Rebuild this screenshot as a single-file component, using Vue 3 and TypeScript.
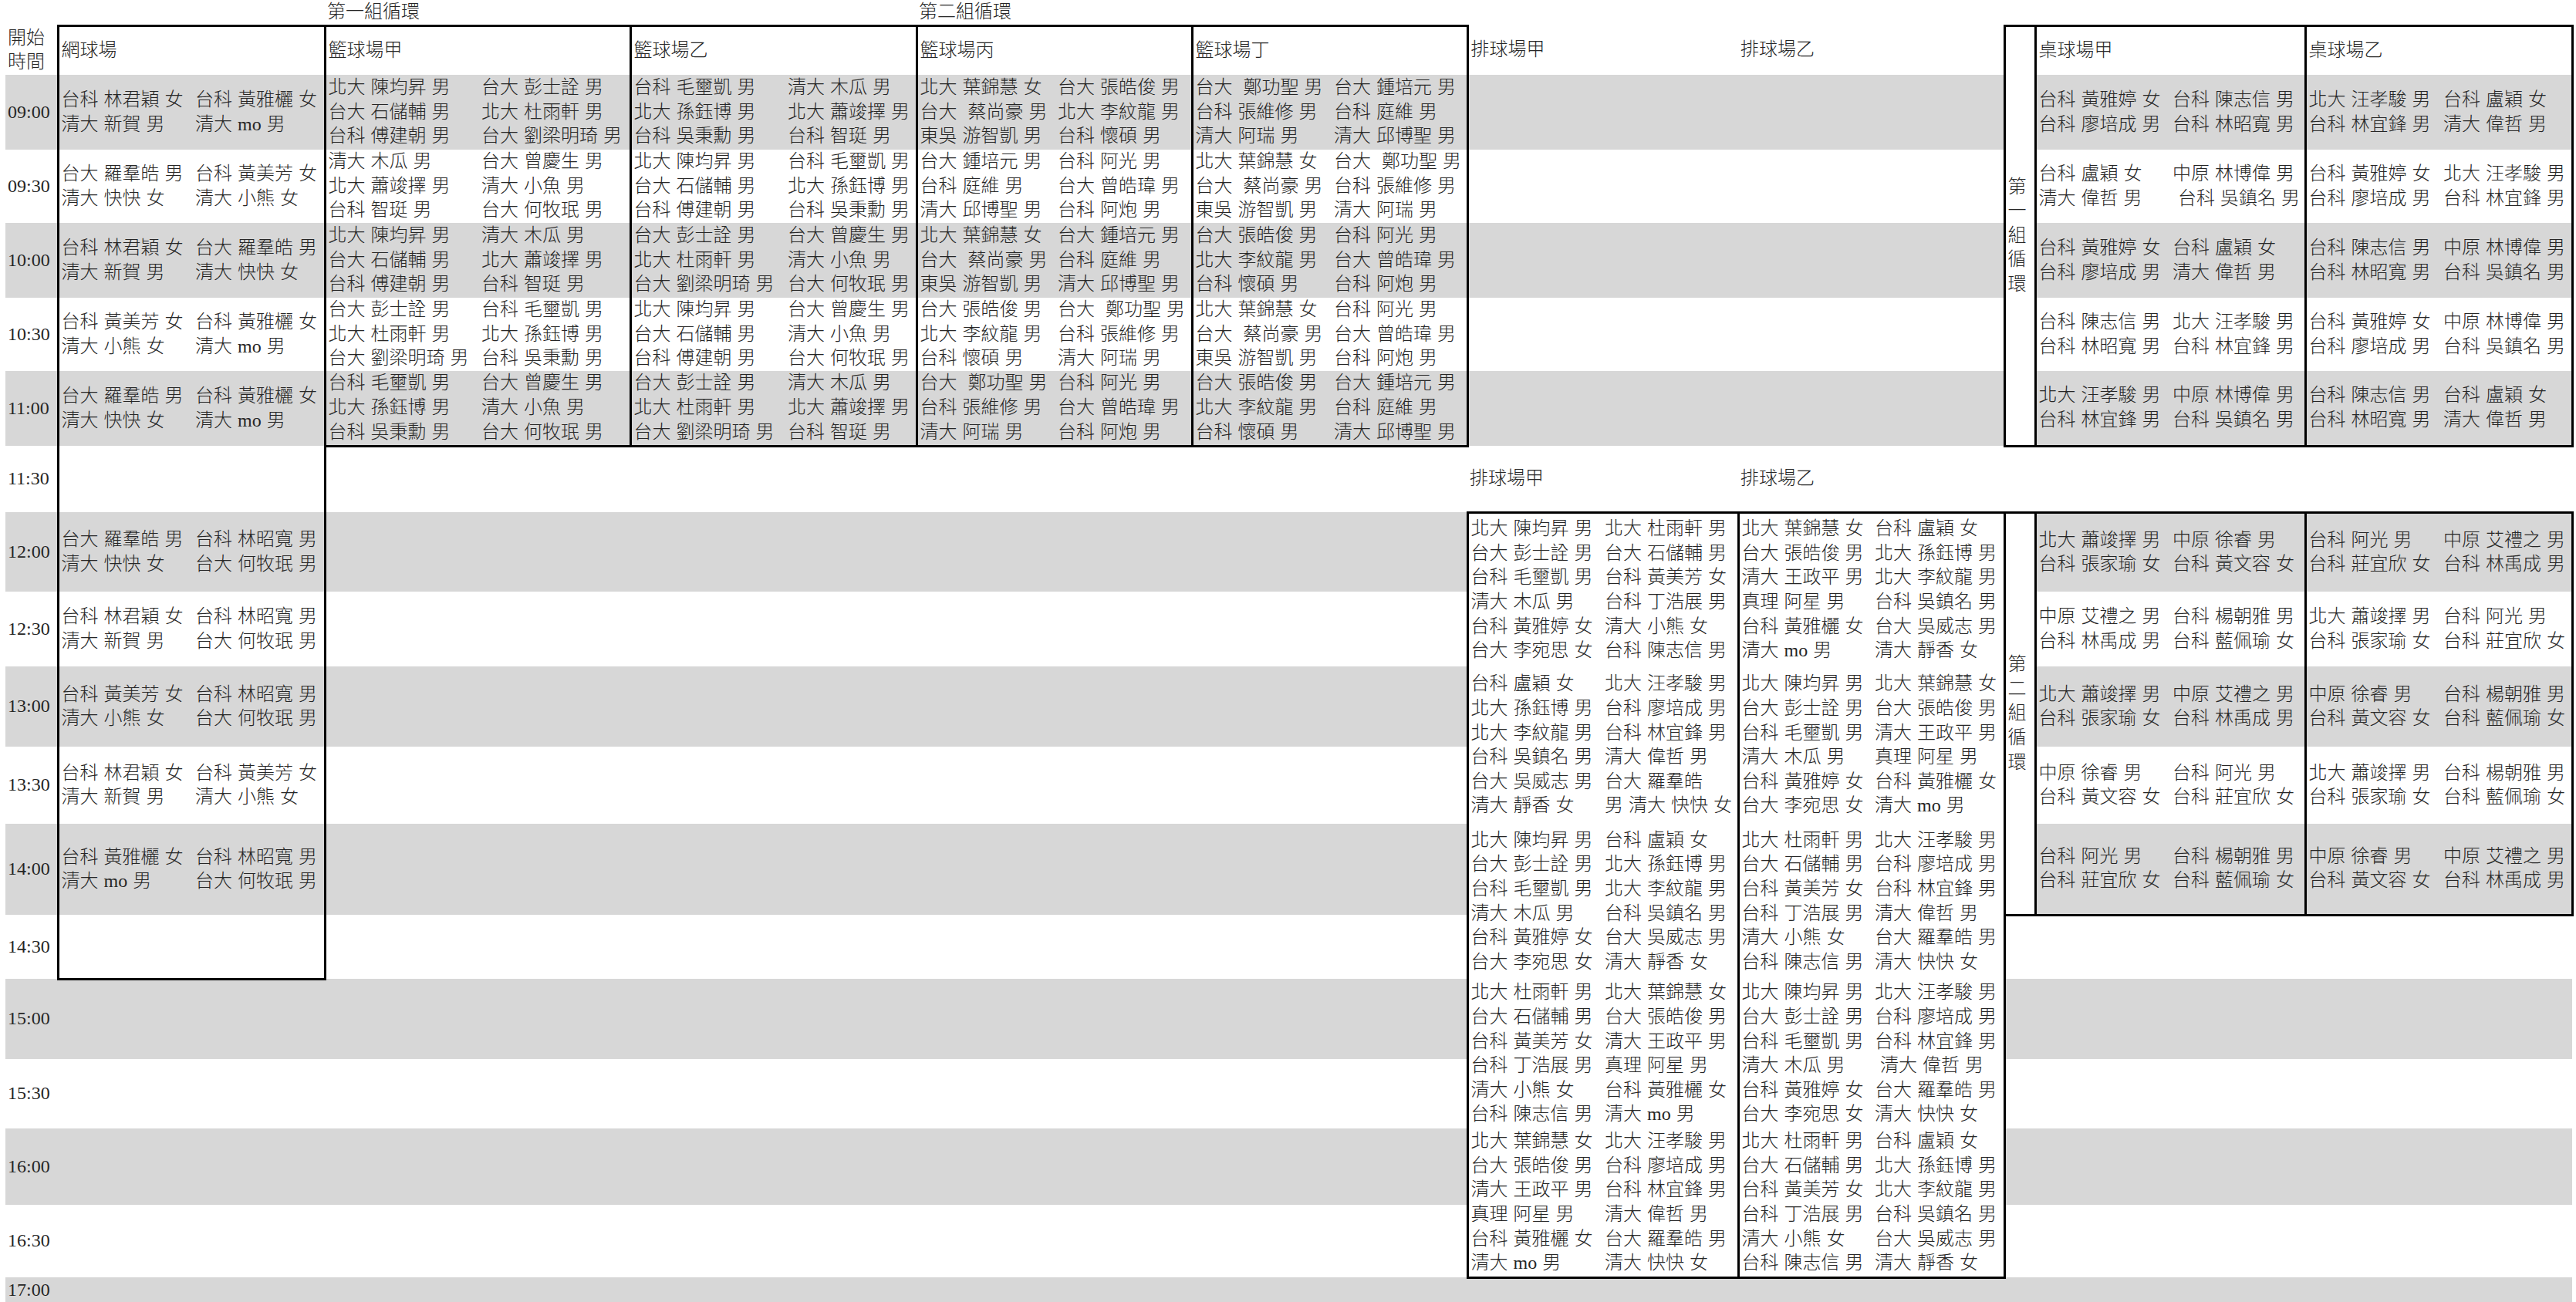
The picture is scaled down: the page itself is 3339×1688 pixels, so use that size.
<script setup lang="ts">
interface Cell {
  lines?: string[]
  span?: number
  rows?: number
  cls?: string
}
interface Row {
  height: number
  grey: boolean
  cells: Cell[]
}

const colWidths = [68, 175, 171, 200, 196, 201, 170, 180, 177, 181, 176, 175, 176, 174, 171, 40, 175, 175, 176, 170]

const ten = {
  a: '台科 林君穎 女|清大 新賀 男',
  b: '台科 黃雅欐 女|清大 mo 男',
  c: '台大 羅羣皓 男|清大 快快 女',
  d: '台科 黃美芳 女|清大 小熊 女',
  e: '台科 林昭寬 男|台大 何牧珉 男',
}
const bk = {
  a: '北大 陳均昇 男|台大 石儲輔 男|台科 傅建朝 男',
  b: '台大 彭士詮 男|北大 杜雨軒 男|台大 劉梁明琦 男',
  c: '清大 木瓜 男|北大 蕭竣擇 男|台科 智珽 男',
  d: '台大 曾慶生 男|清大 小魚 男|台大 何牧珉 男',
  e: '台科 毛壐凱 男|北大 孫鈺博 男|台科 吳秉勳 男',
  f: '北大 葉錦慧 女|台大  蔡尚豪 男|東吳 游智凱 男',
  g: '台大 張皓俊 男|北大 李紋龍 男|台科 懷碩 男',
  h: '台大 鍾培元 男|台科 庭維 男|清大 邱博聖 男',
  i: '台科 阿光 男|台大 曾皓瑋 男|台科 阿炮 男',
  j: '台大  鄭功聖 男|台科 張維修 男|清大 阿瑞 男',
}
const vb = {
  a: '北大 陳均昇 男|台大 彭士詮 男|台科 毛壐凱 男|清大 木瓜 男|台科 黃雅婷 女|台大 李宛思 女',
  b: '北大 杜雨軒 男|台大 石儲輔 男|台科 黃美芳 女|台科 丁浩展 男|清大 小熊 女|台科 陳志信 男',
  c: '台科 盧穎 女|北大 孫鈺博 男|北大 李紋龍 男|台科 吳鎮名 男|台大 吳威志 男|清大 靜香 女',
  d: '北大 汪孝駿 男|台科 廖培成 男|台科 林宜鋒 男|清大 偉哲 男|台大 羅羣皓 男|清大 快快 女',
  dw: '北大 汪孝駿 男|台科 廖培成 男|台科 林宜鋒 男|清大 偉哲 男|台大 羅羣皓|男 清大 快快 女',
  ds: '北大 汪孝駿 男|台科 廖培成 男|台科 林宜鋒 男| 清大 偉哲 男|台大 羅羣皓 男|清大 快快 女',
  e: '北大 葉錦慧 女|台大 張皓俊 男|清大 王政平 男|真理 阿星 男|台科 黃雅欐 女|清大 mo 男',
}
const tt = {
  a: '台科 黃雅婷 女|台科 廖培成 男',
  b: '台科 陳志信 男|台科 林昭寬 男',
  c: '台科 盧穎 女|清大 偉哲 男',
  d: '中原 林博偉 男|台科 吳鎮名 男',
  ds: '中原 林博偉 男| 台科 吳鎮名 男',
  e: '北大 汪孝駿 男|台科 林宜鋒 男',
  f: '北大 蕭竣擇 男|台科 張家瑜 女',
  g: '中原 徐睿 男|台科 黃文容 女',
  h: '中原 艾禮之 男|台科 林禹成 男',
  i: '台科 楊朝雅 男|台科 藍佩瑜 女',
  j: '台科 阿光 男|台科 莊宜欣 女',
}

function court(first?: string, second?: string, extra = '', rows?: number): Cell[] {
  return [
    { lines: first?.split('|'), cls: `l ${extra}`, rows },
    { lines: second?.split('|'), cls: `r ${extra}`, rows },
  ]
}
const time = (t: string): Cell => ({ lines: [t] })
const blank = (span: number): Cell => ({ span })
const label = (t: string, cls = ''): Cell => ({ lines: [t], span: 2, cls })

const rows: Row[] = [
  {
    height: 32,
    grey: false,
    cells: [
      blank(3),
      { lines: ['第一組循環'], span: 4 },
      { lines: ['第二組循環'], span: 4 },
      blank(9),
    ],
  },
  {
    height: 64,
    grey: false,
    cells: [
      { lines: ['開始', '時間'] },
      label('網球場', 'l r t'),
      label('籃球場甲', 'l r t'),
      label('籃球場乙', 'l r t'),
      label('籃球場丙', 'l r t'),
      label('籃球場丁', 'l r t'),
      label('排球場甲'),
      label('排球場乙'),
      { lines: ['第', '一', '組', '循', '環'], rows: 6, cls: 'l r t b w' },
      label('桌球場甲', 'l r t'),
      label('桌球場乙', 'l r t'),
    ],
  },
  {
    height: 97,
    grey: true,
    cells: [
      time('09:00'),
      ...court(ten.a, ten.b),
      ...court(bk.a, bk.b),
      ...court(bk.e, bk.c),
      ...court(bk.f, bk.g),
      ...court(bk.j, bk.h),
      blank(4),
      ...court(tt.a, tt.b),
      ...court(tt.e, tt.c),
    ],
  },
  {
    height: 95,
    grey: false,
    cells: [
      time('09:30'),
      ...court(ten.c, ten.d),
      ...court(bk.c, bk.d),
      ...court(bk.a, bk.e),
      ...court(bk.h, bk.i),
      ...court(bk.f, bk.j),
      blank(4),
      ...court(tt.c, tt.ds),
      ...court(tt.a, tt.e),
    ],
  },
  {
    height: 97,
    grey: true,
    cells: [
      time('10:00'),
      ...court(ten.a, ten.c),
      ...court(bk.a, bk.c),
      ...court(bk.b, bk.d),
      ...court(bk.f, bk.h),
      ...court(bk.g, bk.i),
      blank(4),
      ...court(tt.a, tt.c),
      ...court(tt.b, tt.d),
    ],
  },
  {
    height: 95,
    grey: false,
    cells: [
      time('10:30'),
      ...court(ten.d, ten.b),
      ...court(bk.b, bk.e),
      ...court(bk.a, bk.d),
      ...court(bk.g, bk.j),
      ...court(bk.f, bk.i),
      blank(4),
      ...court(tt.b, tt.e),
      ...court(tt.a, tt.d),
    ],
  },
  {
    height: 97,
    grey: true,
    cells: [
      time('11:00'),
      ...court(ten.c, ten.b),
      ...court(bk.e, bk.d, 'b'),
      ...court(bk.b, bk.c, 'b'),
      ...court(bk.j, bk.i, 'b'),
      ...court(bk.g, bk.h, 'b'),
      blank(4),
      ...court(tt.e, tt.d, 'b'),
      ...court(tt.b, tt.c, 'b'),
    ],
  },
  {
    height: 86,
    grey: false,
    cells: [
      time('11:30'),
      ...court(),
      blank(8),
      label('排球場甲'),
      label('排球場乙'),
      blank(5),
    ],
  },
  {
    height: 103,
    grey: true,
    cells: [
      time('12:00'),
      ...court(ten.c, ten.e),
      blank(8),
      ...court(vb.a, vb.b, 't w', 2),
      ...court(vb.e, vb.c, 't w', 2),
      { lines: ['第', '二', '組', '循', '環'], rows: 5, cls: 'l r t b w' },
      ...court(tt.f, tt.g, 't'),
      ...court(tt.j, tt.h, 't'),
    ],
  },
  {
    height: 97,
    grey: false,
    cells: [
      time('12:30'),
      ...court(ten.a, ten.e),
      blank(8),
      ...court(tt.h, tt.i),
      ...court(tt.f, tt.j),
    ],
  },
  {
    height: 104,
    grey: true,
    cells: [
      time('13:00'),
      ...court(ten.d, ten.e),
      blank(8),
      ...court(vb.c, vb.dw, 'w', 2),
      ...court(vb.a, vb.e, 'w', 2),
      ...court(tt.f, tt.h),
      ...court(tt.g, tt.i),
    ],
  },
  {
    height: 100,
    grey: false,
    cells: [
      time('13:30'),
      ...court(ten.a, ten.d),
      blank(8),
      ...court(tt.g, tt.j),
      ...court(tt.f, tt.i),
    ],
  },
  {
    height: 118,
    grey: true,
    cells: [
      time('14:00'),
      ...court(ten.b, ten.e),
      blank(8),
      ...court(vb.a, vb.c, 'w', 2),
      ...court(vb.b, vb.d, 'w', 2),
      ...court(tt.j, tt.i, 'b'),
      ...court(tt.g, tt.h, 'b'),
    ],
  },
  {
    height: 83,
    grey: false,
    cells: [time('14:30'), ...court(undefined, undefined, 'b'), blank(8), blank(5)],
  },
  {
    height: 104,
    grey: true,
    cells: [
      time('15:00'),
      blank(10),
      ...court(vb.b, vb.e, 'w', 2),
      ...court(vb.a, vb.ds, 'w', 2),
      blank(5),
    ],
  },
  {
    height: 90,
    grey: false,
    cells: [time('15:30'), blank(10), blank(5)],
  },
  {
    height: 99,
    grey: true,
    cells: [
      time('16:00'),
      blank(10),
      ...court(vb.e, vb.d, 'w b', 2),
      ...court(vb.b, vb.c, 'w b', 2),
      blank(5),
    ],
  },
  {
    height: 94,
    grey: false,
    cells: [time('16:30'), blank(10), blank(5)],
  },
  {
    height: 33,
    grey: true,
    cells: [time('17:00'), blank(19)],
  },
]
</script>

<template>
  <main class="page">
    <table class="schedule">
      <colgroup>
        <col v-for="(w, i) in colWidths" :key="i" :width="w" />
      </colgroup>
      <tbody>
        <tr
          v-for="(row, r) in rows"
          :key="r"
          :class="{ grey: row.grey }"
          :style="{ height: row.height + 'px' }"
        >
          <td
            v-for="(cell, c) in row.cells"
            :key="c"
            :colspan="cell.span ?? 1"
            :rowspan="cell.rows ?? 1"
            :class="cell.cls"
          >
            <div v-for="(line, n) in cell.lines ?? []" :key="n">{{ line }}</div>
          </td>
        </tr>
      </tbody>
    </table>
  </main>
</template>

<style scoped>
.page {
  padding-left: 7px;
}
.schedule {
  border-collapse: collapse;
  table-layout: fixed;
  width: 3327px;
  font-family: "Liberation Serif", "Noto Sans CJK TC", serif;
  font-size: 24px;
  font-weight: 300;
  line-height: 31.66px;
  word-spacing: 1px;
  color: #262626;
}
.grey {
  background: #d7d7d7;
}
td {
  padding: 0 0 0 3px;
  vertical-align: middle;
  white-space: pre;
  overflow: visible;
}
.w {
  background: #fff;
}
.l {
  border-left: 3px solid #000;
}
.r {
  border-right: 3px solid #000;
}
.t {
  border-top: 3px solid #000;
}
.b {
  border-bottom: 3px solid #000;
}
</style>
